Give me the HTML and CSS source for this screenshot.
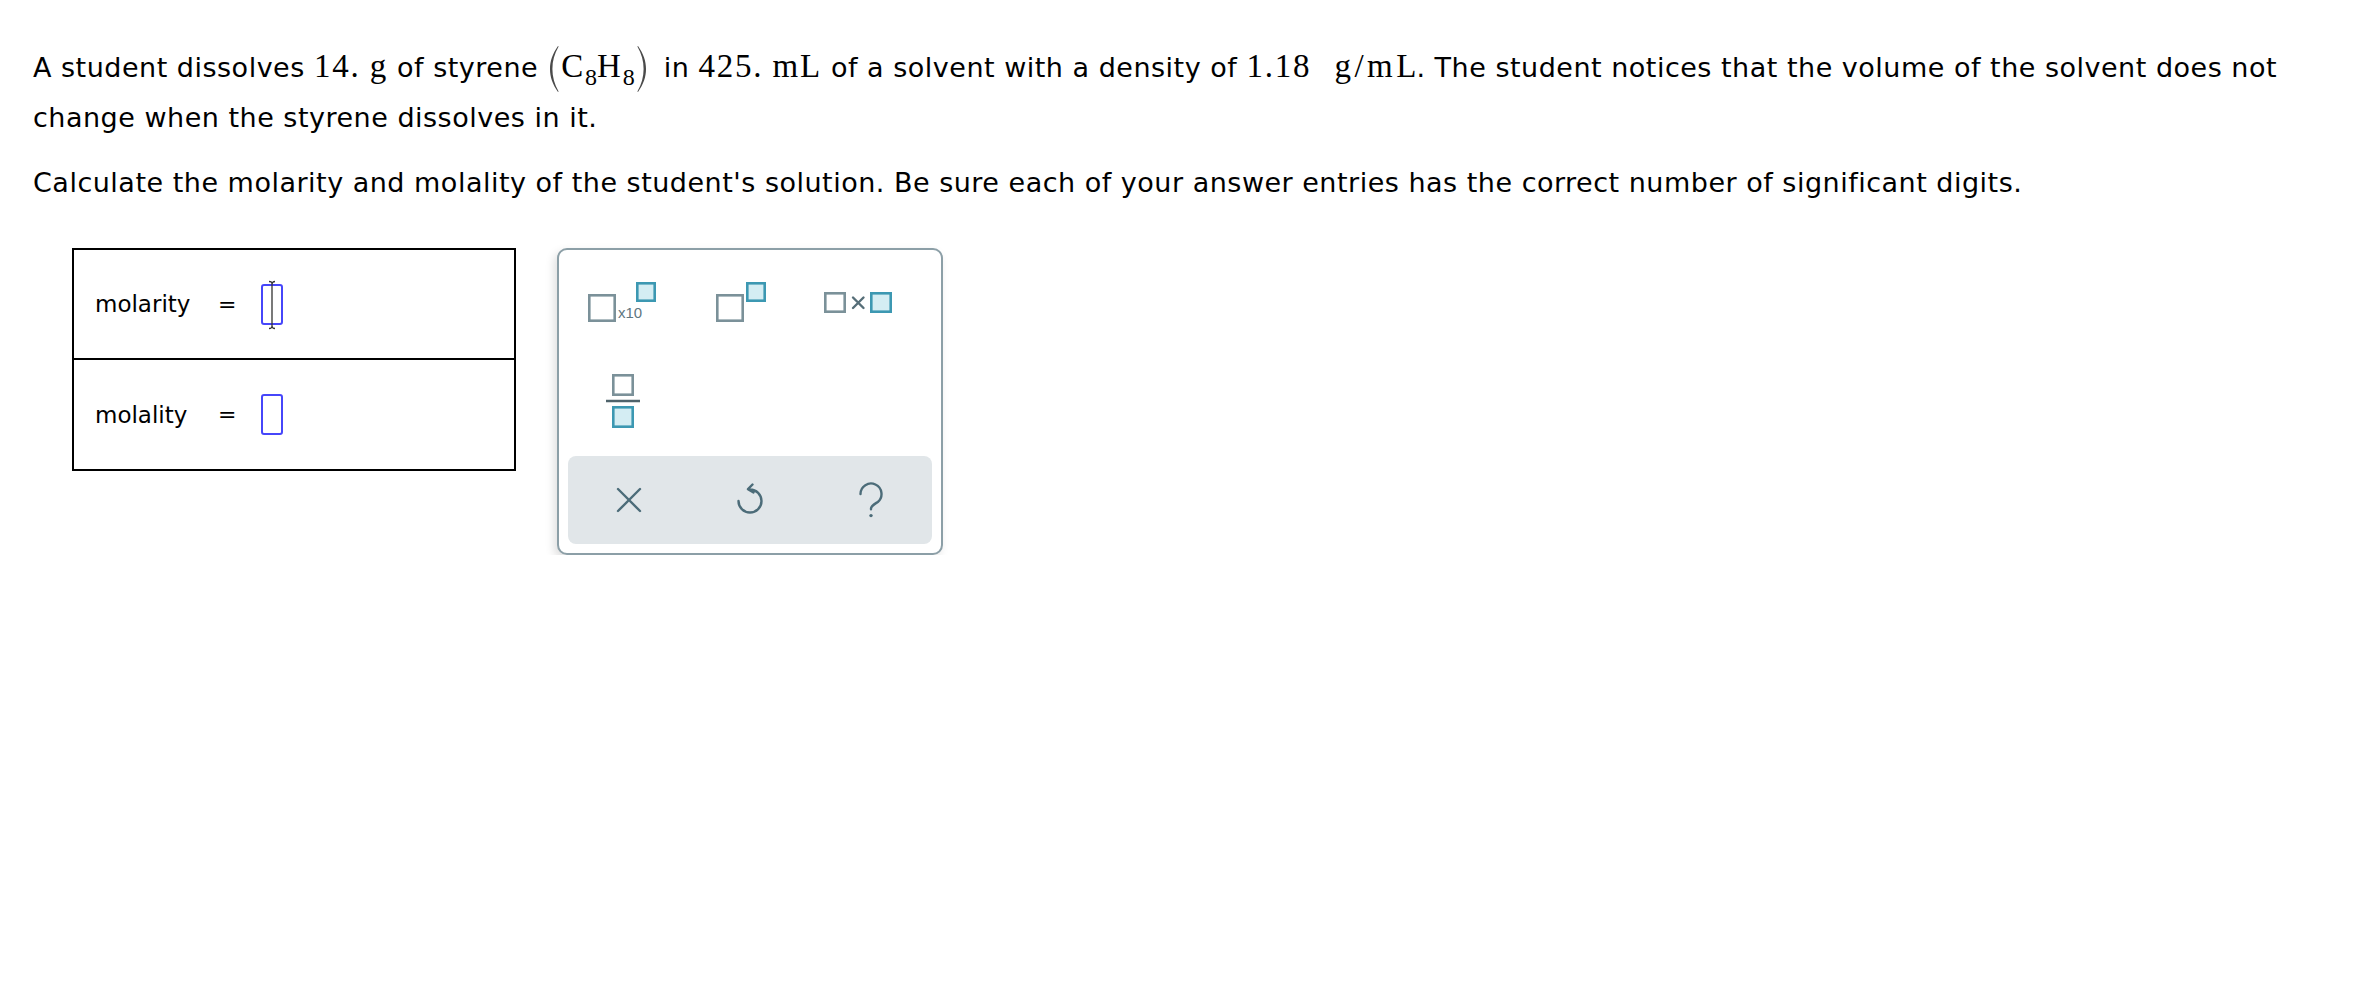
FILE: index.html
```html
<!DOCTYPE html>
<html>
<head>
<meta charset="utf-8">
<link rel="stylesheet" href="styles.css">
</head>
<body>
<div class="page">
  <p class="q">A student dissolves <span class="m">14.</span> <span class="m">g</span> of styrene <span class="chem"><svg class="paren" viewBox="0 0 10 48" width="10" height="48"><path d="M9 1 C3.5 9 1 16 1 24 C1 32 3.5 39 9 47 L9.6 46.4 C5.4 39 3.4 32 3.4 24 C3.4 16 5.4 9 9.6 1.6 Z" fill="#4a4a4a"/></svg><span class="m">C<sub>8</sub>H<sub>8</sub></span><svg class="paren" viewBox="0 0 10 48" width="10" height="48"><path d="M1 1 C6.5 9 9 16 9 24 C9 32 6.5 39 1 47 L0.4 46.4 C4.6 39 6.6 32 6.6 24 C6.6 16 4.6 9 0.4 1.6 Z" fill="#4a4a4a"/></svg></span> in <span class="m">425.</span> <span class="m">mL</span> of a solvent with a density of <span class="m">1.18</span> <span class="m gap">g/mL</span>. The student notices that the volume of the solvent does not change when the styrene dissolves in it.</p>
  <p class="q">Calculate the molarity and molality of the student's solution. Be sure each of your answer entries has the correct number of significant digits.</p>

  <div class="work">
    <div class="answers">
      <div class="row">
        <span class="label">molarity</span>
        <span class="eq">=</span>
        <span class="box">
          <svg class="caret" viewBox="0 0 10 50" width="10" height="50"><path d="M2 1.5 Q5 1.5 5 4 Q5 1.5 8 1.5 M5 4 V46 M2 48.5 Q5 48.5 5 46 Q5 48.5 8 48.5" fill="none" stroke="#333" stroke-width="1.3"/></svg>
        </span>
      </div>
      <div class="row">
        <span class="label">molality</span>
        <span class="eq">=</span>
        <span class="box"></span>
      </div>
    </div>

    <div class="palette">
      <div class="keys">
        <div class="key">
          <svg viewBox="0 0 121 100" width="121" height="100">
            <rect class="g" x="21.3" y="43.3" width="25.4" height="25.4"/>
            <text class="x10" x="50" y="66">x10</text>
            <rect class="b" x="69.3" y="31.3" width="17.4" height="17.4"/>
          </svg>
        </div>
        <div class="key">
          <svg viewBox="0 0 121 100" width="121" height="100">
            <rect class="g" x="28.3" y="43.3" width="25.4" height="25.4"/>
            <rect class="b" x="58.3" y="31.3" width="17.4" height="17.4"/>
          </svg>
        </div>
        <div class="key">
          <svg viewBox="0 0 122 100" width="122" height="100">
            <rect class="g" x="15.3" y="41.3" width="19.4" height="18.4"/>
            <path class="x" d="M43 45.5 L53.5 56 M53.5 45.5 L43 56"/>
            <rect class="b" x="61.3" y="41.3" width="19.4" height="18.4"/>
          </svg>
        </div>
        <div class="key">
          <svg viewBox="0 0 121 100" width="121" height="100">
            <rect class="g" x="45.3" y="23.3" width="19.4" height="19.4"/>
            <line class="bar" x1="38" y1="49" x2="72" y2="49"/>
            <rect class="b" x="45.3" y="55.3" width="19.4" height="19.4"/>
          </svg>
        </div>
        <div class="key"></div>
        <div class="key"></div>
      </div>
      <div class="actions">
        <div class="act">
          <svg viewBox="0 0 26 26" width="26" height="26"><path d="M2 2 L24 24 M24 2 L2 24" /></svg>
        </div>
        <div class="act">
          <svg class="undo" viewBox="0 0 30 36" width="30" height="36"><path d="M3.5 21 A11.5 11.5 0 1 0 15 9.5 M17.5 4.5 L13 9.2 L18.5 12.5"/></svg>
        </div>
        <div class="act">
          <svg class="help" viewBox="0 0 26 40" width="26" height="40"><path d="M2.5 14 A10.5 10.5 0 1 1 19.8 22 C15.6 24.6 13 25.8 13 28.6 V29.2"/><circle cx="13" cy="35.6" r="1.7" fill="#4c6c79" stroke="none"/></svg>
        </div>
      </div>
    </div>
  </div>
</div>
</body>
</html>
```
FILE: styles.css
```css
html, body {
  margin: 0;
  padding: 0;
  background: #fff;
}
.page {
  padding: 43px 0 0 33px;
  width: 2300px;
  font-family: "DejaVu Sans", Verdana, sans-serif;
  color: #000;
}
.q {
  margin: 0 0 15px 0;
  font-size: 27px;
  letter-spacing: 0.5px;
  line-height: 50px;
}
.m {
  font-family: "Liberation Serif", "Times New Roman", serif;
  font-size: 33px;
  letter-spacing: 1.8px;
  line-height: 1;
}
.m sub {
  font-size: 24px;
  vertical-align: -8px;
  line-height: 1;
  letter-spacing: 0;
}
.gap {
  margin-left: 14px;
  margin-right: -3.5px;
  letter-spacing: 3.5px;
}
.chem {
  white-space: nowrap;
  margin-right: 6px;
}
.paren {
  display: inline-block;
  vertical-align: -16px;
  margin: 0 2px;
}
.work {
  display: flex;
  align-items: flex-start;
  gap: 41px;
  margin: 40px 0 0 39px;
}
.answers {
  width: 440px;
  border: 2px solid #000;
}
.row {
  display: flex;
  align-items: center;
  height: 108px;
  padding-left: 21px;
  font-size: 23px;
}
.row + .row {
  border-top: 2px solid #000;
  height: 109px;
}
.label {
  width: 123px;
}
.eq {
  width: 19px;
  font-size: 22px;
}
.box {
  position: relative;
  width: 18px;
  height: 37px;
  margin-left: 24px;
  border: 2px solid #4646fa;
  border-radius: 3px;
}
.caret {
  position: absolute;
  left: 4px;
  top: -6px;
}
.palette {
  width: 364px;
  padding: 2px 9px 9px 9px;
  border: 2px solid #8c9fa7;
  border-radius: 10px;
  background: #fff;
  box-shadow: -3px 4px 10px rgba(0, 0, 0, 0.13);
}
.keys {
  display: grid;
  grid-template-columns: 121px 121px 122px;
  grid-auto-rows: 100px;
}
.key svg {
  display: block;
}
.g {
  fill: #fff;
  stroke: #7b9199;
  stroke-width: 2.6;
}
.b {
  fill: #d4edf3;
  stroke: #3c98b2;
  stroke-width: 2.6;
}
.x10 {
  font-family: "Liberation Sans", Arial, sans-serif;
  font-size: 15px;
  fill: #5e7680;
}
.x {
  stroke: #566e78;
  stroke-width: 2.4;
  stroke-linecap: round;
  fill: none;
}
.bar {
  stroke: #4f636b;
  stroke-width: 2.6;
}
.actions {
  display: grid;
  grid-template-columns: repeat(3, 1fr);
  height: 88px;
  margin-top: 4px;
  background: #e1e6e9;
  border-radius: 8px;
}
.act {
  display: flex;
  align-items: center;
  justify-content: center;
}
.act svg path {
  fill: none;
  stroke: #4c6c79;
  stroke-width: 2.4;
  stroke-linecap: round;
  stroke-linejoin: round;
}
.undo {
  margin-top: -4px;
}
```
